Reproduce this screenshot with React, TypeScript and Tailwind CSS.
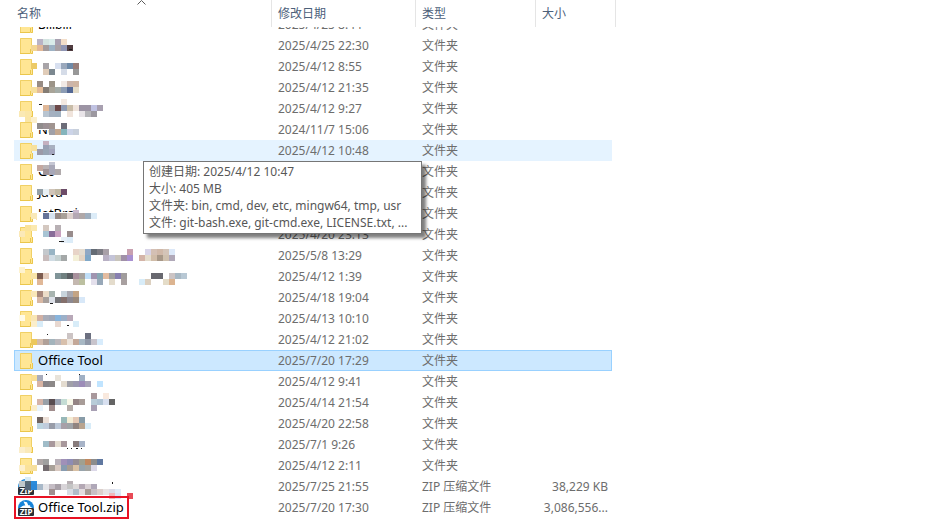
import clsx from 'clsx';

// A run of 6px mosaic blocks: y inside the row, first column, colours ("-" leaves a gap)
type Run = [y: number, col: number, colors: string];

interface FileItem {
  name?: string;
  date: string;
  type?: string;
  size?: string;
  state?: 'hover' | 'selected';
  // strips that hide a part of the name: x, y, width, height
  cover?: [number, number, number, number][];
  ink?: [number, number, number, number][];
  blocks?: Run[];
}

const files: FileItem[] = [
  {
    date: '2025/4/25 22:30',
    blocks: [
      [4, 0, 'b9b3c5 d3e3e0 d9ecea a8a0b0 f3dec9'],
      [10, -1, 'f3d793 e2b898 a39b9c 9db2c4 a8a0a4 9096b4 503c40'],
    ],
    ink: [[69, 14, 3, 1]],
  },
  {
    date: '2025/4/12 8:55',
    blocks: [
      [7, -1, 'ecca66 - a8a4a8 - d8e0f0 9aa8bc 6f8aa8 987d79'],
      [13, 1, 'e0ccb8 7c8890 - d5dce8 - 989898'],
    ],
  },
  {
    date: '2025/4/12 21:35',
    blocks: [
      [4, 0, '988c84 - 9c9488 - f1e9e5 ccb5aa d0b6a2'],
      [10, -1, 'f6df9c e4bc98 847c74 a8a498 a4aca8 8c9cb4 546894 e4dcc8'],
    ],
  },
  {
    date: '2025/4/12 9:27',
    blocks: [
      [1, 4, 'f3e9e1'],
      [7, 1, 'e0b898 a0a4ac 6c4848 909cb4 c8bca8 f0e4dc 9c94a4 9c94a4 c0c2e2 a8a0b0'],
      [13, -3, 'fae9b4 fbe7a8 - - b8c4d0 a4b0c0 a0b0c0 - f0e4dc - e8e4e8 b4b4b8 9c98a0'],
      [19, -2, 'fae6a6 fbefcc'],
    ],
    ink: [[39, 6, 3, 1]],
  },
  {
    name: 'Nu',
    date: '2024/11/7 15:06',
    cover: [[37, 1, 20, 10]],
    blocks: [
      [4, 0, '908c8c 9c9094 a09490 - 6c6c78'],
      [10, 2, 'a0a0a8 c4a890 84b4bc ccd4e8 c8d0dc'],
    ],
  },
  {
    date: '2025/4/12 10:48',
    state: 'hover',
    blocks: [
      [1, 1, 'c4b0c0'],
      [5, -1, 'f7e09c - 98a0b4 a8b0c0'],
      [9, 0, '9c9aa8 98a4b4 a3a5bd'],
    ],
    ink: [[52, 14, 2, 1]],
  },
  {
    name: 'Go',
    date: '2025/4/12 8:31',
    cover: [[37, 1, 24, 10]],
    blocks: [
      [1, 2, 'c5c7d4'],
      [4, 0, 'c4a8a0 b9b3b5 a8a8b8'],
      [8, 1, 'a09498 a8a8b8 b0aaac'],
    ],
  },
  {
    name: 'Java',
    date: '2025/4/12 8:40',
    cover: [[37, 1, 30, 11]],
    blocks: [[7, 0, '94a0a8 e8f0f4 d0c4b8 c0b8a4 6c4c68']],
  },
  {
    name: 'JetBrains',
    date: '2025/4/12 8:52',
    cover: [[37, 9, 60, 12], [79, 3, 20, 14]],
    blocks: [
      [7, 6, 'c8b8cc'],
      [10, -1, 'f9e8b8 - 667499 d8e4f0 988c88 a8a098 dcd0cc b4a8b4 b0a8a8 9fafbf dcecf8'],
    ],
  },
  {
    date: '2025/4/20 23:13',
    blocks: [
      [1, -2, 'fae29a fbe9b0 - d4c8c0 - b8b0b4'],
      [7, -3, 'fbe9b8 - - - a8c4d4 886c98 c8a0c0 - 988c8c'],
      [13, 4, 'e6eff8 dcecf8'],
    ],
    ink: [[59, 17, 5, 1]],
  },
  {
    date: '2025/5/8 13:29',
    blocks: [
      [4, 1, 'c4c8cc 98b4c4 - - - e8d4c8 e4dcd0 90a8c4 646b74 7c7c84 a8a0a8 - - - c8a0b0 - - d8d4e8 d4c0b4 d0b8a8 d4c4b8 dce8f8'],
      [10, 1, 'c8bcbc d0dce4 c4d0d0 a4a8a8 - f4f0d8 e4d4c4 80a8c8 - - b8b0c4 c4c4d8 c8c4bc a090a8 a890d0 - d4b4a8 e4dccc d0bca8 a89888 cfc0ae b0a8b8'],
    ],
  },
  {
    date: '2025/4/12 1:39',
    blocks: [
      [1, -3, 'fef3d0'],
      [7, -1, 'f9e4a8 7c5c50 e4ccbc - 809498 708080 5c6064 a8909c a8a4a0 c0dff8 a094b0 88a8b4 e4bca0 a0a0a0 8880b0 a09c9c - - - - 68686f 68686f - ccc4c4 a8b8c4 b8c8d4'],
      [13, 0, 'e0b898 - - - - - c4b8b0 bcc0a0 - e4e0ec 98a8b8 - e4dccc - a8a0a0 - - d8ecf8 dcd0c0 - - e4dcc8 dcb490'],
    ],
  },
  {
    date: '2025/4/18 19:04',
    blocks: [
      [4, -1, 'f9e7b8 a8887c ecdcc8 a8b4b0 - c8d4dc a8a8b0 c4a484'],
      [10, 0, 'd8b8a4 a8a09c dce0e8 747478 84706c 8c8890 98887c d8e8f8'],
    ],
    ink: [[50, 16, 3, 1]],
  },
  {
    date: '2025/4/13 10:10',
    blocks: [
      [7, -3, 'fffbe9 - f9e6b4 d0b0a4 a8acb8 a0a8b8 88b4dc 9cb0c8 b8a8b8'],
      [13, -1, 'fbeecb d8ecf8 - - e8d8d0 - - d8ecf8'],
    ],
    ink: [[67, 17, 2, 1]],
  },
  {
    date: '2025/4/12 21:02',
    blocks: [
      [4, 5, 'ccc4c4 - - 6c7080'],
      [10, -1, 'ecc85c d4bcac b0a098 a4b4bc bcb8bc d8c0ac ece4dc c4a898 a8b8c4 9098a8 c8c4cc d8ecfc'],
    ],
    ink: [[47, 5, 1, 1]],
  },
  { name: 'Office Tool', date: '2025/7/20 17:29', state: 'selected' },
  {
    date: '2025/4/12 9:41',
    blocks: [
      [4, -1, 'f9df94 a8acbc - - e8e3da - - - a0b0c4'],
      [10, 0, 'd8b4a4 888488 8c8888 - e4dcd0 a0a0a8 9c98b0 9c8cb8 a8a4b8 - c0e4ff'],
    ],
    ink: [[46, 3, 1, 1], [79, 3, 1, 1]],
  },
  {
    date: '2025/4/14 21:54',
    blocks: [
      [1, 9, 'a8989c - f9e9de'],
      [7, 0, 'd4b4a8 98a0a8 584c50 9ca4b4 c4dcd4 f8f8e8 948484 a89c98 - b8ccd8 b0c4d4 d8e0f0 646464'],
      [13, -1, 'fbeec8 e9f4fc - a08c8c - - b4aca8 - - - a8a0b4'],
    ],
  },
  {
    date: '2025/4/20 22:58',
    blocks: [
      [4, 0, '706460 ece0d8 - - 98b8b8 f4ecd4 e4c8b4 889ca8'],
      [10, 0, 'bcd4e0 c0ccdc 989ca8 bcc8d8 a8a0a8 a0a4a8 908480 b8a490 d8ecf8'],
    ],
  },
  {
    date: '2025/7/1 9:26',
    blocks: [
      [7, 1, 'a0bcc8 a8989c e4dcd0 a8989c - 887c7c a8b4c8'],
      [13, -3, 'fbeecb fae9b8'],
    ],
    ink: [[67, 14, 1, 1], [71, 14, 1, 1], [76, 14, 2, 1], [81, 14, 1, 1]],
  },
  {
    date: '2025/4/12 2:11',
    blocks: [
      [4, 0, 'b0a8a8 a0a0a0 - b8b0b8 a090b8 8e8cb4 948c94 a0a090 c08860 8c8c8c 6078a0'],
      [10, -3, 'fdf0cc fae29a f6df9c - 746c70 a8a098 d8c8c0 889cb0 a89c90 d8c0a4 98a4ac a4a4a0 dcd8e8'],
    ],
  },
  {
    date: '2025/7/25 21:55',
    type: 'ZIP 压缩文件',
    size: '38,229 KB',
    blocks: [
      [1, -3, '- d8ecf8'],
      [5, -3, 'c0c8cc 5a6c78 2c8cdc - - - - - b8b0b4'],
      [8, -2, '56687a 2c88d8 a8b8c8 e4e4e8 c4bcc4 a8a0a8 d8d4d8 c4c4c4 dcd8d8 b4a8b4 d8d0d4 b0a8b8'],
      [13, 0, '- - a09090 - - d8dce4 b0bcc8 e4dce0 a89c98 c8c0c4 dcd0cc e8e4e4 dcdce8 e0ecf8'],
      [17, 12, 'f0b8bc dce4f4 - e84a56'],
    ],
    ink: [[112, 6, 1, 2]],
  },
  {
    name: 'Office Tool.zip',
    date: '2025/7/20 17:30',
    type: 'ZIP 压缩文件',
    size: '3,086,556...',
  },
];

function FolderIcon() {
  return (
    <svg className="h-4 w-4 shrink-0" viewBox="0 0 16 16" aria-hidden="true">
      <path d="M2 0h12v10h1v6H2z" fill="#ffe694" />
      <path d="M2.5 15V.5h11V10" fill="none" stroke="#f0d066" />
      <path d="M2 15.500h10.500M12.500 15V11M14.500 10v5.500H13" fill="none" stroke="#eac64c" />
    </svg>
  );
}

function ZipIcon() {
  return (
    <svg className="h-4 w-4 shrink-0" viewBox="0 0 16 16" aria-hidden="true">
      <path d="M0 8a8 8 0 0 1 16 0z" fill="#1683d8" />
      <path d="M1 8.500 4.500 6h7L15 8.500z" fill="#fff" />
      <path d="M5.500 1.500 9 2.200l1.200 3h2.300L8.500 8.200 5 5.500h2.300z" fill="#fff" />
      <rect y="8" width="16" height="8" rx="1" fill="#2b3036" />
      <text x="8" y="15" textAnchor="middle" fontSize="8" fontWeight="bold" fill="#fff">
        ZIP
      </text>
    </svg>
  );
}

function Mosaic({ item }: { item: FileItem }) {
  return (
    <svg
      className="pointer-events-none absolute top-0 left-0 h-[21px] w-[258px] overflow-visible"
      viewBox="14 0 258 21"
      shapeRendering="crispEdges"
      aria-hidden="true"
    >
      {item.cover?.map(([x, y, w, h], i) => (
        <rect key={i} x={x} y={y} width={w} height={h} fill="#fff" />
      ))}
      {item.blocks?.map(([y, col, colors]) =>
        colors.split(' ').map((color, i) =>
          color === '-' ? null : (
            <rect key={`${y}-${i}`} x={37 + (col + i) * 6} y={y} width="6" height="6" fill={`#${color}`} />
          )
        )
      )}
      {item.ink?.map(([x, y, w, h], i) => (
        <rect key={i} x={x} y={y} width={w} height={h} fill="#1c1c1c" />
      ))}
    </svg>
  );
}

function Tooltip() {
  return (
    <div
      role="tooltip"
      className="absolute top-[21px] left-[129px] z-10 w-[279px] border border-[#767676] bg-white py-px pb-0.5 pl-[5px] leading-[17px] whitespace-nowrap text-[#575757] shadow-[4px_4px_3px_rgba(0,0,0,0.5)]"
    >
      <p>创建日期: 2025/4/12 10:47</p>
      <p>大小: 405 MB</p>
      <p>文件夹: bin, cmd, dev, etc, mingw64, tmp, usr</p>
      <p>文件: git-bash.exe, git-cmd.exe, LICENSE.txt, ...</p>
    </div>
  );
}

function FileRow({ item, last }: { item: FileItem; last: boolean }) {
  const cell = clsx(
    'h-[21px] p-0',
    item.state === 'hover' && 'bg-[#e5f3ff]',
    item.state === 'selected' && 'border-y border-[#99d1ff] bg-[#cce8ff]'
  );
  const selected = item.state === 'selected';

  return (
    <tr aria-selected={selected}>
      <td className={clsx(cell, 'relative', selected ? 'border-l pl-[3px]' : 'pl-1')}>
        <div className="flex items-center gap-1 text-[13px] leading-[19px] text-black">
          {item.type ? <ZipIcon /> : <FolderIcon />}
          <span>{item.name}</span>
        </div>
        {item.blocks && <Mosaic item={item} />}
        {item.state === 'hover' && <Tooltip />}
        {last && <div className="absolute -top-px left-0 h-[23px] w-[115px] border-2 border-[#e81224]" />}
      </td>
      <td className={clsx(cell, 'pl-1.5')}>{item.date}</td>
      <td className={clsx(cell, 'pl-1.5')}>{item.type ?? '文件夹'}</td>
      <td className={clsx(cell, 'pr-1 text-right', selected && 'border-r')}>{item.size}</td>
    </tr>
  );
}

export default function App() {
  const clipped = 'flex h-2 flex-col justify-end overflow-hidden';

  return (
    <main className="min-h-screen overflow-hidden bg-white pl-3.5 font-['Noto_Sans','Noto_Sans_CJK_SC',sans-serif] text-xs leading-[19px] text-[#6d6d6d]">
      <table className="w-[602px] table-fixed border-separate border-spacing-0 whitespace-nowrap">
        <colgroup>
          <col className="w-[258px]" />
          <col className="w-36" />
          <col className="w-[120px]" />
          <col className="w-[76px]" />
          <col className="w-1" />
        </colgroup>
        <thead className="text-left text-[#4c607a]">
          <tr>
            <th className="relative h-[27px] border-r border-[#e5e5e5] p-0 pl-[3px] font-normal" aria-sort="ascending">
              名称
              <svg className="absolute top-0 left-[123px] h-[5px] w-[9px]" viewBox="0 0 9 5" aria-hidden="true">
                <path d="M.5 4.500l4-4 4 4" fill="none" stroke="#5a5a5a" />
              </svg>
            </th>
            <th className="border-r border-[#e5e5e5] p-0 pl-1.5 font-normal">修改日期</th>
            <th className="border-r border-[#e5e5e5] p-0 pl-1.5 font-normal">类型</th>
            <th colSpan={2} className="border-r border-[#e5e5e5] p-0 pl-1.5 font-normal">大小</th>
          </tr>
        </thead>
        <tbody>
          {/* scrolled halfway under the header */}
          <tr>
            <td className="p-0 pl-1">
              <div className={clipped}>
                <div className="flex h-[21px] shrink-0 items-center gap-1 text-black">
                  <FolderIcon />
                  <span>Bilibili</span>
                </div>
              </div>
            </td>
            <td className="p-0 pl-1.5">
              <div className={clipped}>
                <div className="h-[21px] shrink-0 leading-[21px]">2025/4/25 8:44</div>
              </div>
            </td>
            <td className="p-0 pl-1.5">
              <div className={clipped}>
                <div className="h-[21px] shrink-0 leading-[21px]">文件夹</div>
              </div>
            </td>
            <td className="p-0"></td>
          </tr>
          {files.map((item, i) => (
            <FileRow key={i} item={item} last={i === files.length - 1} />
          ))}
        </tbody>
      </table>
    </main>
  );
}
